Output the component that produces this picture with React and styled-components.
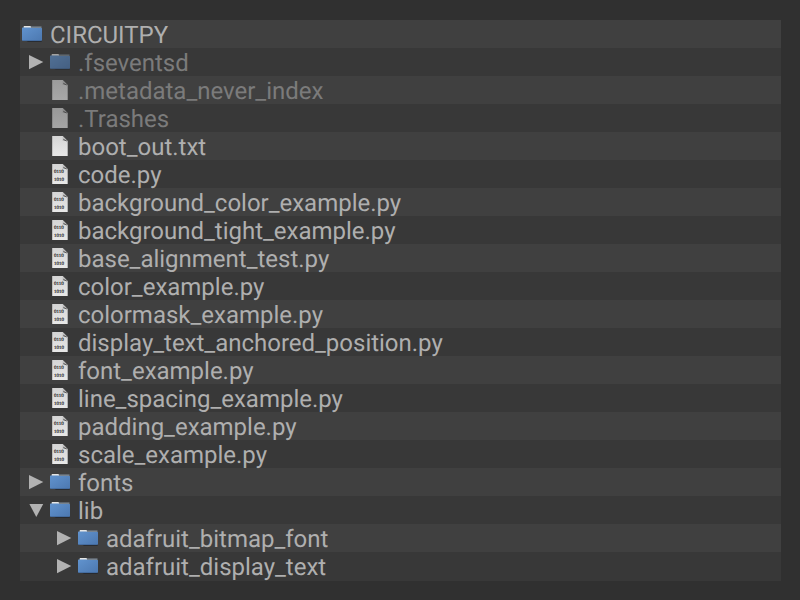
import React from "react";
import styled, { createGlobalStyle } from "styled-components";

const GlobalStyle = createGlobalStyle`
  body { margin: 0; background: #303030; }
`;

const Page = styled.main`
  box-sizing: border-box;
  width: 800px;
  height: 600px;
  padding: 20px 19px 19px 20px;
  background: #303030;
  overflow: hidden;
`;

const Tree = styled.ul`
  margin: 0;
  padding: 0 0 1px;
  list-style: none;
  background: #383838;
`;

const Row = styled.li`
  display: flex;
  height: 28px;
  padding-left: ${(p) => p.$depth * 28}px;
  background: #383838;
  &:nth-child(odd) { background: #404040; }
`;

const Slot = styled.svg`
  display: block;
  flex: none;
  width: 28px;
  height: 28px;
  opacity: ${(p) => (p.$dim ? 0.62 : 1)};
`;

const Label = styled.span`
  padding-left: 2px;
  font: 400 24px/30px Roboto, sans-serif;
  letter-spacing: -0.01px;
  text-rendering: geometricPrecision;
  white-space: pre;
  color: ${(p) => (p.$dim ? "#7b7b7b" : "#afafaf")};
`;

const Bits = styled.text`
  font: 400 5px "Liberation Serif", serif;
  fill: #202020;
  stroke: #202020;
  stroke-width: 0.15px;
  text-rendering: geometricPrecision;
`;

const Defs = styled.svg`
  display: block;
  width: 0;
  height: 0;
`;

const Gradients = () => (
  <Defs aria-hidden="true">
    <defs>
      <linearGradient id="blue" x1="0" y1="0" x2="1" y2="1">
        <stop offset="0" stopColor="#6193ce" />
        <stop offset="1" stopColor="#4c78b0" />
      </linearGradient>
      <linearGradient id="paper" x1="0" y1="0" x2="0" y2="1">
        <stop offset="0" stopColor="#d4d4d4" />
        <stop offset="1" stopColor="#e8e8e8" />
      </linearGradient>
    </defs>
  </Defs>
);

const Folder = ({ dim }) => (
  <Slot viewBox="0 0 28 28" $dim={dim}>
    <path d="M6 20.5h15.7v1.4H8z" fill="#22262c" opacity=".75" />
    <path d="M10 6.4h11.5v3H10z" fill="#788490" />
    <path d="M3.8 5.9h6.8l.6 2.6H3.5z" fill="#e6e6e4" />
    <path d="M2 8q0-.6.6-.6h8l.6.5h10.2q.6 0 .6.6V20q0 .8-.8.8H2.8q-.8 0-.8-.8z" fill="url(#blue)" />
    <path d="M2.6 20.5h18.8" stroke="#426da6" strokeWidth=".6" />
  </Slot>
);

const File = ({ code, dim }) => (
  <Slot viewBox="0 0 28 28" $dim={dim}>
    <path d="M4.2 4h10.6l4.9 5v15H4.2z" fill="url(#paper)" />
    <path d="M14.7 4.6v4.5h4.6z" fill="#b9b9b9" />
    <path d="M15.4 7.5l3.4 1.5" fill="none" stroke="#4a4a4a" strokeWidth=".9" />
    {code && (
      <>
        <Bits x="6" y="13">0110</Bits>
        <Bits x="6" y="20.8">1010</Bits>
      </>
    )}
  </Slot>
);

const Arrow = ({ open }) => (
  <Slot viewBox="0 0 28 28">
    {(open === true || open === false) && (
      <path d={open ? "M9.4 8h13.8l-6.9 13z" : "M9 7v14.2l14.3-7.1z"} fill="#b2b2b2" />
    )}
  </Slot>
);

const entries = [
  { name: "CIRCUITPY", kind: "folder", root: true },
  { name: ".fseventsd", kind: "folder", open: false, dim: true },
  { name: ".metadata_never_index", kind: "file", dim: true },
  { name: ".Trashes", kind: "file", dim: true },
  { name: "boot_out.txt", kind: "file" },
  { name: "code.py", kind: "code" },
  { name: "background_color_example.py", kind: "code" },
  { name: "background_tight_example.py", kind: "code" },
  { name: "base_alignment_test.py", kind: "code" },
  { name: "color_example.py", kind: "code" },
  { name: "colormask_example.py", kind: "code" },
  { name: "display_text_anchored_position.py", kind: "code" },
  { name: "font_example.py", kind: "code" },
  { name: "line_spacing_example.py", kind: "code" },
  { name: "padding_example.py", kind: "code" },
  { name: "scale_example.py", kind: "code" },
  { name: "fonts", kind: "folder", open: false },
  { name: "lib", kind: "folder", open: true },
  { name: "adafruit_bitmap_font", kind: "folder", open: false, depth: 1 },
  { name: "adafruit_display_text", kind: "folder", open: false, depth: 1 },
];

export default function App() {
  return (
    <Page>
      <GlobalStyle />
      <Gradients />
      <Tree>
        {entries.map((e) => (
          <Row key={e.name} $depth={e.depth || 0}>
            {!e.root && <Arrow open={e.open} />}
            {e.kind === "folder" ? <Folder dim={e.dim} /> : <File code={e.kind === "code"} dim={e.dim} />}
            <Label $dim={e.dim}>{e.name}</Label>
          </Row>
        ))}
      </Tree>
    </Page>
  );
}
